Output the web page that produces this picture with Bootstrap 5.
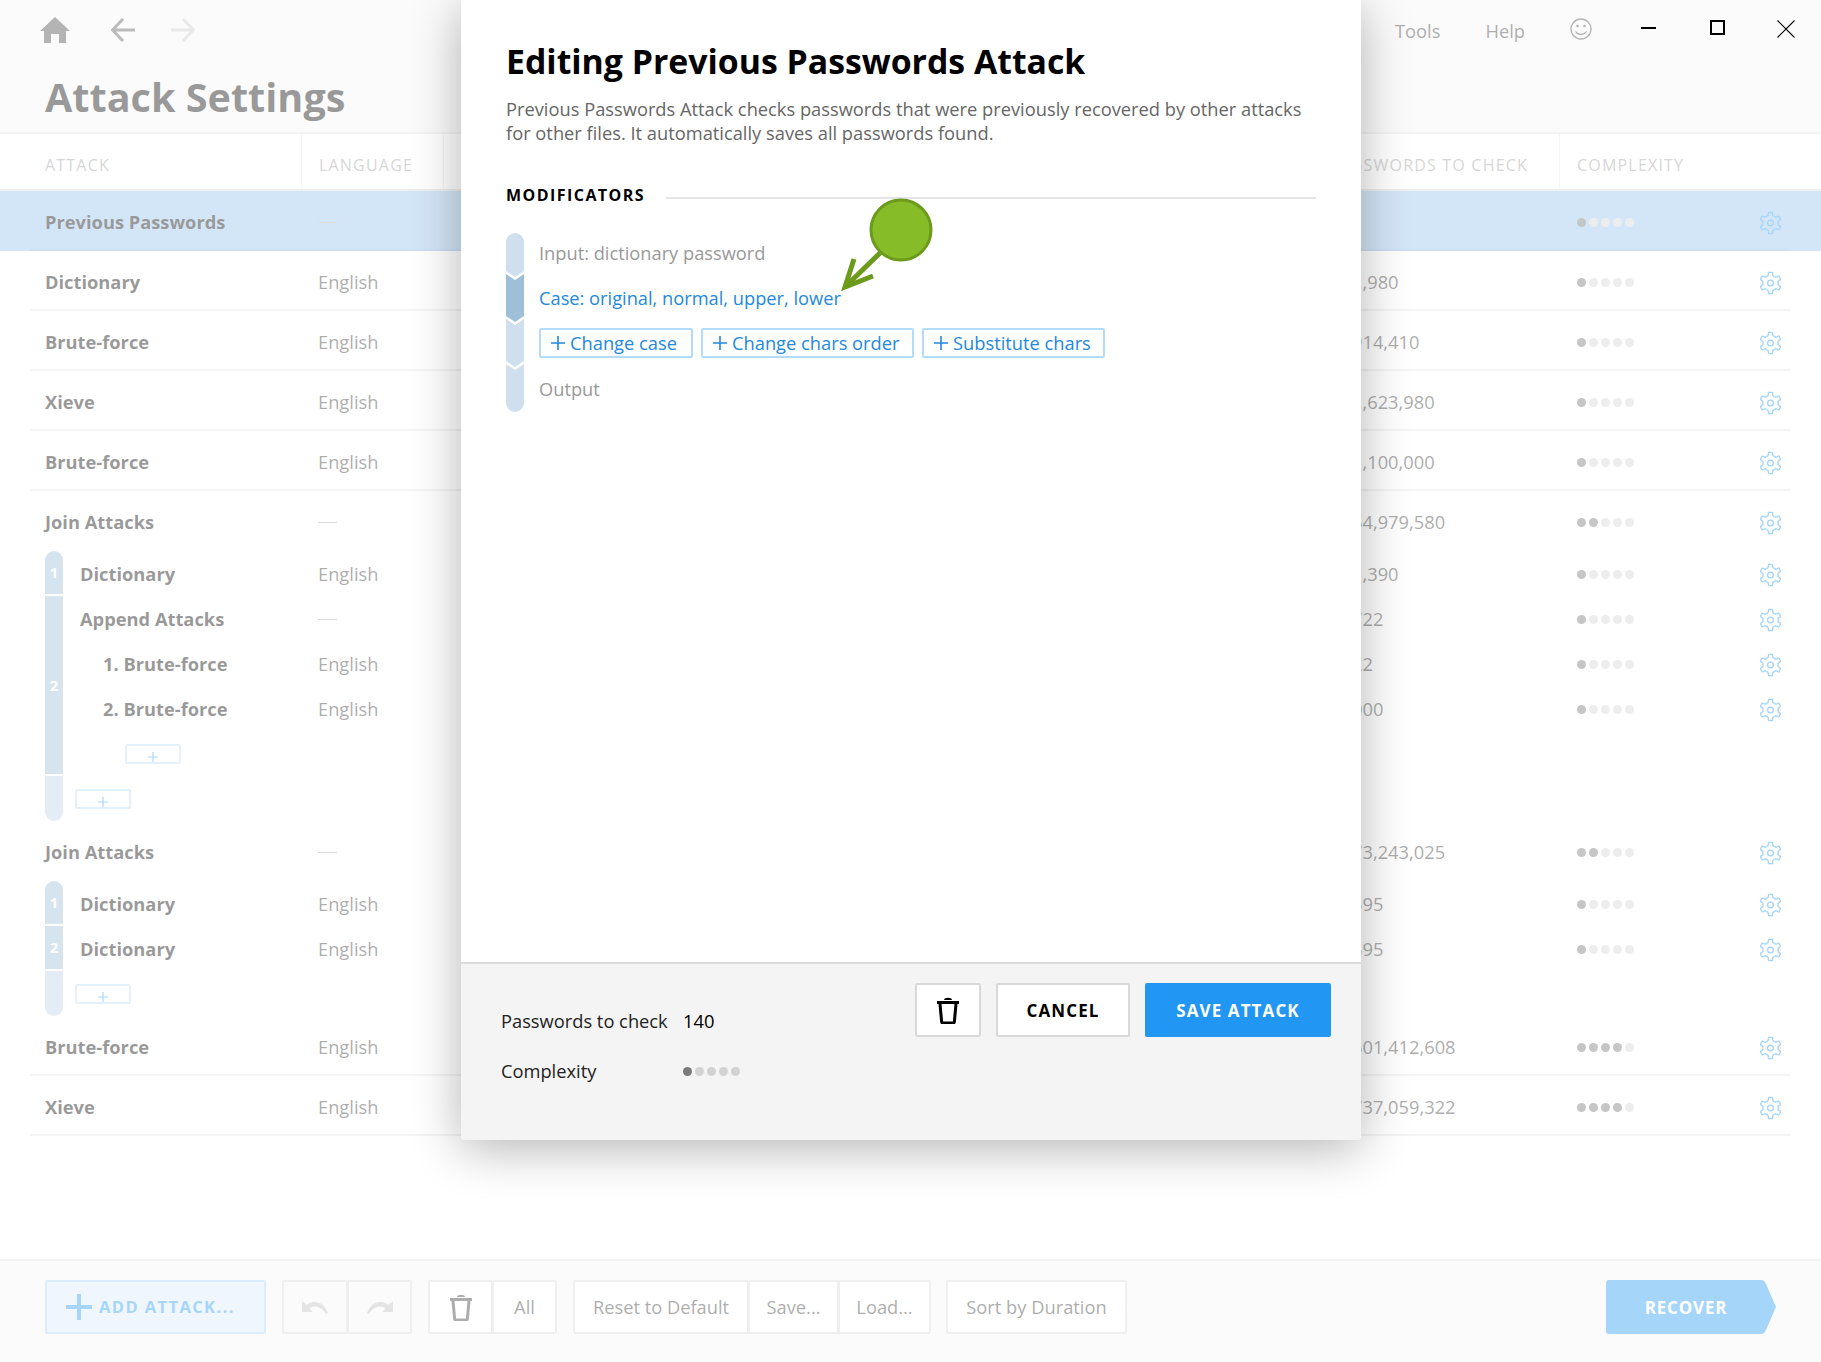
<!DOCTYPE html>
<html lang="en">
<head>
<meta charset="utf-8">
<title>Attack Settings</title>
<link href="https://cdn.jsdelivr.net/npm/bootstrap@5.3.0/dist/css/bootstrap.min.css" rel="stylesheet">
<style>
html,body{margin:0;height:100%;background:#fff}
body{font-family:"Open Sans","Liberation Sans",sans-serif;font-size:18.3px;color:#000;overflow:hidden}
.appwin{position:relative;width:1821px;height:1362px;overflow:hidden}
.topzone{height:134px;background:#f4f4f4;border-bottom:2px solid #e4e4e4;padding:17px 26px 0 40px}
.navline{height:26px}
.page-ttl{margin:28px 0 0 5px;font-size:39.6px;line-height:52px;font-weight:700;color:#000}
.menu-txt{color:#333;font-size:18.3px;line-height:28px}
.winctl{position:relative;z-index:3}
.colhead{display:grid;grid-template-columns:256px 142px 1116px 1fr;height:57px;padding-left:45px;align-items:center;font-size:16px;letter-spacing:1.2px;color:#999;text-transform:uppercase;border-bottom:2px solid #d8d8d8}
.colhead>div{height:100%;display:flex;align-items:center;padding-top:6px}
.colhead .dv{border-left:1px solid #e8e8e8;padding-left:17px}
.colhead .pwh{justify-content:flex-end;padding-right:31px}
.arow-wrap.is-sel{background:#91c0ed}
.arow{display:grid;grid-template-columns:273px 1034px 225px 183px 21px;height:60px;margin:0 30px;padding:4px 10px 0 15px;align-items:center;border-bottom:2px solid #e3e3e3}
.is-sel .arow{border-bottom-color:#7fb0e0;}
.arow.noline{border-bottom:0;padding-top:2px}
.subrow{display:grid;grid-template-columns:255px 1034px 225px 183px 21px;height:45px;padding-top:1px;align-items:center}
.groupbox{margin-left:45px;margin-right:30px}
.groupbox .subrow{padding-right:10px}
.segcol{width:18px;gap:2px}
.seg{background:#98bbd7;color:#fff;font-size:15px;font-weight:700;display:flex;align-items:center;justify-content:center}
.seg.s-first{border-radius:9px 9px 0 0}
.seg.s-last{background:#bbd2e6;border-radius:0 0 9px 9px}
.nm{font-weight:700;color:#000}
.lv0{padding-left:17px}
.lv1{padding-left:40px}
.lng{color:#333}
.dash{display:block;width:19px;height:1px;background:#aaa}
.pwv{color:#333}
.dots{gap:3px;display:flex}
.dots i{display:block;width:9px;height:9px;border-radius:50%;background:#d2d2d2}
.dots i.on{background:#707070}
.dots i.dot-modal{background:#7a7a7a}
.gear-ic{width:21px;height:24px;margin-top:1px;display:block;color:#2196f3}
.miniplus{display:flex;align-items:center;justify-content:center;height:20px;width:56px;padding:6px 0 0;background:#fff;border:2px solid #b9dcf9;border-radius:2px;color:#2196f3}
.miniplus.lv-a{margin-left:12px}
.miniplus.lv-b{margin-left:62px}
.botbar{position:absolute;left:0;right:0;bottom:0;height:103px;background:#f4f4f4;border-top:2px solid #e4e4e4;padding:19px 45px 0}
.tbtn{height:54px;border:2px solid #d7d7d7;border-radius:2px;background:#fff;color:#333;font-size:18.3px;padding:0;display:flex;align-items:center;justify-content:center}
.tbtn:disabled{background:#f4f4f4;opacity:1;border-color:#d7d7d7}
.tbtn-add{width:221px;background:#d7e8fa;border-color:#a5cff7;color:#2196f3;font-weight:700;font-size:16.5px;letter-spacing:1.4px;justify-content:flex-start;padding-left:19px;gap:7px}
.w65{width:65px}.w66{width:66px}.w176{width:176px}.w91{width:91px}.w93{width:93px}.w181{width:181px}
.tgap{gap:16px}
.mgn1{margin-left:-1px}
.recov{margin-left:auto;width:170px;height:54px;flex:none;position:relative;color:#fff;font-weight:700;font-size:17px;letter-spacing:.8px;display:flex;align-items:center;justify-content:center;padding:2px 10px 0 0;background:none;border:0}
.recov svg{position:absolute;inset:0}
.recov span{position:relative}
.veil{position:absolute;inset:0;background:rgba(255,255,255,.6);z-index:1}
.dialogbox{position:absolute;left:461px;top:0;width:900px;height:1140px;background:#fff;z-index:2;box-shadow:0 8px 50px rgba(0,0,0,.3);border-radius:0 0 4px 4px}
.dlg-main{padding:36px 45px 0}
.dlg-ttl{font-size:33.8px;line-height:50px;font-weight:700;margin:0;color:#000}
.dlg-desc{font-size:18.3px;line-height:24px;color:#666;margin:11px 0 0}
.sect-line{margin-top:40px;height:20px;gap:21px}
.sect-ttl{font-size:16px;font-weight:700;letter-spacing:1.45px;line-height:20px}
.sect-rule{height:2px;background:#e4e4e4;margin-top:12px}
.stepper{margin-top:26px;gap:15px}
.barsvg{display:block;margin-top:2px}
.stp{height:45px;display:flex;align-items:center;font-size:18.25px;color:#999}
.stp.stp-up{padding-bottom:2px}
.stp.act{color:#2288e0}
.addbtn{height:30px;border:2px solid #b3dcfb;border-radius:2px;background:#fff;color:#2288e0;font-size:18.3px;padding:0 0 0 10px;display:flex;align-items:center;justify-content:flex-start;gap:5px;line-height:26px}
.ab1{width:154px}.ab2{width:213px}.ab3{width:183px}
.addrow{gap:8px;margin-top:-1px;margin-bottom:1px}
.dlg-foot{background:#f4f4f4;border-top:2px solid #dcdcdc;height:178px;padding:19px 30px 0 40px;border-radius:0 0 4px 4px}
.lbl{width:182px;color:#222}
.foot-l1{margin-top:26px;line-height:24px}
.foot-l2{margin-top:26px;line-height:24px;align-items:center}
.fbtn{height:54px;border:2px solid #d9d9d9;background:#fff;border-radius:2px;padding:2px 0 0;color:#000;font-weight:700;font-size:17px;letter-spacing:1.1px;display:flex;align-items:center;justify-content:center}
.fb-tr{width:66px;padding-top:0}.fb-ca{width:134px}
.fb-sv{width:186px;background:#2196f3;border-color:#2196f3;color:#fff}
.fgap{gap:15px}
.annot{position:absolute;left:375px;top:190px;z-index:4;display:block}
</style>
</head>
<body>
<svg width="0" height="0" class="d-none">
  <symbol id="gearsym" viewBox="1 0 22 24">
    <g fill="none" stroke="currentColor" stroke-width="1.4" stroke-linejoin="round">
      <circle cx="12" cy="12" r="3"/>
      <g id="gt"><path d="M8 5.07 9.500 4.300 10 .8H14L14.500 4.300 16 5.070"/></g>
      <use href="#gt" transform="rotate(60 12 12)"/>
      <use href="#gt" transform="rotate(120 12 12)"/>
      <use href="#gt" transform="rotate(180 12 12)"/>
      <use href="#gt" transform="rotate(240 12 12)"/>
      <use href="#gt" transform="rotate(300 12 12)"/>
    </g>
  </symbol>
  <symbol id="trashsym" viewBox="0 0 22 28">
    <path d="M0 5h22v3H0zM7 4c0-3 8-3 8 0z" fill="currentColor"/>
    <path d="M3 8l1.6 17.5c.1 1 .8 1.5 1.6 1.5h9.6c.8 0 1.5-.5 1.6-1.5L19 8" fill="none" stroke="currentColor" stroke-width="3"/>
  </symbol>
  <symbol id="plussym" viewBox="0 0 14 14"><path d="M7 0v14M0 7h14" stroke="currentColor" stroke-width="1.6" fill="none"/></symbol>
</svg>
<div class="appwin">
  <header class="topzone">
    <div class="navline d-flex align-items-start">
      <svg width="30" height="26" viewBox="0 0 30 26" class="d-block"><path d="M15 0 30 14h-4v12h-7v-9h-8v9H4V14H0z" fill="#444"/></svg>
      <svg width="24" height="24" viewBox="0 0 24 24" class="d-block" style="margin-left:41px;margin-top:1px"><path d="M24 12H2M12 1 1.500 12 12 23" fill="none" stroke="#555" stroke-width="3"/></svg>
      <svg width="24" height="24" viewBox="0 0 24 24" class="d-block" style="margin-left:36px;margin-top:1px"><path d="M0 12H22M12 1 22.500 12 12 23" fill="none" stroke="#c8c8c8" stroke-width="3"/></svg>
      <div class="ms-auto d-flex align-items-start">
        <span class="menu-txt">Tools</span>
        <span class="menu-txt" style="margin-left:45px">Help</span>
        <svg width="22" height="22" viewBox="0 0 22 22" class="d-block" style="margin-left:45px;margin-top:1px"><g fill="none" stroke="#444" stroke-width="1.300"><circle cx="11" cy="11" r="10"/><path d="M5.500 13.500c2.500 4 8.500 4 11 0"/></g><circle cx="7.500" cy="8" r="1.300" fill="#444"/><circle cx="14.500" cy="8" r="1.300" fill="#444"/></svg>
        <div class="winctl d-flex align-items-start">
          <svg width="15" height="22" viewBox="0 0 15 22" class="d-block" style="margin-left:49px"><path d="M0 10h15v2H0z" fill="#000"/></svg>
          <svg width="15" height="16" viewBox="0 0 15 16" class="d-block" style="margin-left:54px;margin-top:3px"><path d="M1 1h13v13H1z" fill="none" stroke="#000" stroke-width="2"/></svg>
          <svg width="18" height="18" viewBox="0 0 18 18" class="d-block" style="margin-left:52px;margin-top:3px"><path d="M.5.5l17 17M17.500.5l-17 17" stroke="#000" stroke-width="1.100" fill="none"/></svg>
        </div>
      </div>
    </div>
    <h1 class="page-ttl">Attack Settings</h1>
  </header>

  <div class="colhead">
    <div>Attack</div>
    <div class="dv">Language</div>
    <div class="dv pwh">Passwords to check</div>
    <div class="dv">Complexity</div>
  </div>

  <div class="arow-wrap is-sel"><div class="arow"><span class="nm">Previous Passwords</span><span class="dash"></span><span class="pwv"></span><span class="dots"><i class="on"></i><i></i><i></i><i></i><i></i></span><svg class="gear-ic"><use href="#gearsym"/></svg></div></div>
  <div class="arow"><span class="nm">Dictionary</span><span class="lng">English</span><span class="pwv">1,980</span><span class="dots"><i class="on"></i><i></i><i></i><i></i><i></i></span><svg class="gear-ic"><use href="#gearsym"/></svg></div>
  <div class="arow"><span class="nm">Brute-force</span><span class="lng">English</span><span class="pwv">914,410</span><span class="dots"><i class="on"></i><i></i><i></i><i></i><i></i></span><svg class="gear-ic"><use href="#gearsym"/></svg></div>
  <div class="arow"><span class="nm">Xieve</span><span class="lng">English</span><span class="pwv">1,623,980</span><span class="dots"><i class="on"></i><i></i><i></i><i></i><i></i></span><svg class="gear-ic"><use href="#gearsym"/></svg></div>
  <div class="arow"><span class="nm">Brute-force</span><span class="lng">English</span><span class="pwv">1,100,000</span><span class="dots"><i class="on"></i><i></i><i></i><i></i><i></i></span><svg class="gear-ic"><use href="#gearsym"/></svg></div>

  <div class="arow noline"><span class="nm">Join Attacks</span><span class="dash"></span><span class="pwv">64,979,580</span><span class="dots"><i class="on"></i><i class="on"></i><i></i><i></i><i></i></span><svg class="gear-ic"><use href="#gearsym"/></svg></div>
  <div class="groupbox d-flex">
    <div class="segcol d-flex flex-column">
      <div class="seg s-first" style="height:43px">1</div>
      <div class="seg" style="height:178px">2</div>
      <div class="seg s-last" style="height:45px"></div>
    </div>
    <div class="flex-grow-1">
      <div class="subrow"><span class="nm lv0">Dictionary</span><span class="lng">English</span><span class="pwv">1,390</span><span class="dots"><i class="on"></i><i></i><i></i><i></i><i></i></span><svg class="gear-ic"><use href="#gearsym"/></svg></div>
      <div class="subrow"><span class="nm lv0">Append Attacks</span><span class="dash"></span><span class="pwv">722</span><span class="dots"><i class="on"></i><i></i><i></i><i></i><i></i></span><svg class="gear-ic"><use href="#gearsym"/></svg></div>
      <div class="subrow"><span class="nm lv1">1. Brute-force</span><span class="lng">English</span><span class="pwv">22</span><span class="dots"><i class="on"></i><i></i><i></i><i></i><i></i></span><svg class="gear-ic"><use href="#gearsym"/></svg></div>
      <div class="subrow"><span class="nm lv1">2. Brute-force</span><span class="lng">English</span><span class="pwv">000</span><span class="dots"><i class="on"></i><i></i><i></i><i></i><i></i></span><svg class="gear-ic"><use href="#gearsym"/></svg></div>
      <div class="subrow"><button class="miniplus lv-b" type="button" aria-label="Add"><svg width="10" height="10"><use href="#plussym"/></svg></button></div>
      <div class="subrow"><button class="miniplus lv-a" type="button" aria-label="Add"><svg width="10" height="10"><use href="#plussym"/></svg></button></div>
    </div>
  </div>

  <div class="arow noline"><span class="nm">Join Attacks</span><span class="dash"></span><span class="pwv">73,243,025</span><span class="dots"><i class="on"></i><i class="on"></i><i></i><i></i><i></i></span><svg class="gear-ic"><use href="#gearsym"/></svg></div>
  <div class="groupbox d-flex">
    <div class="segcol d-flex flex-column">
      <div class="seg s-first" style="height:43px">1</div>
      <div class="seg" style="height:43px">2</div>
      <div class="seg s-last" style="height:45px"></div>
    </div>
    <div class="flex-grow-1">
      <div class="subrow"><span class="nm lv0">Dictionary</span><span class="lng">English</span><span class="pwv">595</span><span class="dots"><i class="on"></i><i></i><i></i><i></i><i></i></span><svg class="gear-ic"><use href="#gearsym"/></svg></div>
      <div class="subrow"><span class="nm lv0">Dictionary</span><span class="lng">English</span><span class="pwv">595</span><span class="dots"><i class="on"></i><i></i><i></i><i></i><i></i></span><svg class="gear-ic"><use href="#gearsym"/></svg></div>
      <div class="subrow"><button class="miniplus lv-a" type="button" aria-label="Add"><svg width="10" height="10"><use href="#plussym"/></svg></button></div>
    </div>
  </div>

  <div class="arow"><span class="nm">Brute-force</span><span class="lng">English</span><span class="pwv">601,412,608</span><span class="dots"><i class="on"></i><i class="on"></i><i class="on"></i><i class="on"></i><i></i></span><svg class="gear-ic"><use href="#gearsym"/></svg></div>
  <div class="arow"><span class="nm">Xieve</span><span class="lng">English</span><span class="pwv">737,059,322</span><span class="dots"><i class="on"></i><i class="on"></i><i class="on"></i><i class="on"></i><i></i></span><svg class="gear-ic"><use href="#gearsym"/></svg></div>

  <footer class="botbar d-flex align-items-start tgap">
    <button class="btn tbtn tbtn-add" type="button"><svg width="26" height="26" viewBox="0 0 26 26"><path d="M11 0h4v11h11v4H15v11h-4V15H0v-4h11z" fill="#2196f3"/></svg>ADD ATTACK...</button>
    <div class="btn-group">
      <button class="btn tbtn w66" type="button" disabled><svg width="26" height="13" viewBox="0 0 26 13"><path d="M0 0v11h11L7.500 7.500C12 4 19 5 24 13l2-1C22 1 12-2 4.500 4z" fill="#bbb"/></svg></button>
      <button class="btn tbtn w65" type="button" disabled><svg width="26" height="13" viewBox="0 0 26 13"><path d="M26 0v11H15l3.500-3.500C14 4 7 5 2 13L0 12C4 1 14-2 21.500 4z" fill="#bbb"/></svg></button>
    </div>
    <div class="btn-group">
      <button class="btn tbtn w65" type="button"><svg width="22" height="28" style="color:#333"><use href="#trashsym"/></svg></button>
      <button class="btn tbtn w65" type="button">All</button>
    </div>
    <div class="btn-group">
      <button class="btn tbtn w176" type="button">Reset to Default</button>
      <button class="btn tbtn w91" type="button">Save...</button>
      <button class="btn tbtn w93" type="button">Load...</button>
    </div>
    <button class="btn tbtn w181 mgn1" type="button">Sort by Duration</button>
    <button class="recov" type="button"><svg width="170" height="54" viewBox="0 0 170 54"><path d="M3 0h152q3 0 4.500 3L170 27l-10.500 24q-1.500 3-4.500 3H3q-3 0-3-3V3q0-3 3-3z" fill="#2196f3"/></svg><span>RECOVER</span></button>
  </footer>

  <div class="veil"></div>

  <section class="dialogbox d-flex flex-column">
    <div class="dlg-main flex-grow-1">
      <h2 class="dlg-ttl">Editing Previous Passwords Attack</h2>
      <p class="dlg-desc">Previous Passwords Attack checks passwords that were previously recovered by other attacks<br>for other files. It automatically saves all passwords found.</p>
      <div class="sect-line d-flex align-items-start">
        <span class="sect-ttl">MODIFICATORS</span>
        <span class="sect-rule flex-grow-1"></span>
      </div>
      <div class="stepper d-flex align-items-start">
        <svg class="barsvg" width="18" height="179" viewBox="0 0 18 179">
          <path d="M0 9a9 9 0 0 1 18 0V38L9 44 0 38Z" fill="#cfdfed"/>
          <path d="M0 41 9 47 18 41V83L9 89 0 83Z" fill="#9ebfd8"/>
          <path d="M0 86 9 92 18 86V128L9 134 0 128Z" fill="#cfdfed"/>
          <path d="M0 131 9 137 18 131V170a9 9 0 0 1-18 0Z" fill="#cfdfed"/>
        </svg>
        <div class="flex-grow-1">
          <div class="stp stp-up">Input: dictionary password</div>
          <div class="stp stp-up act">Case: original, normal, upper, lower</div>
          <div class="stp addrow">
            <button class="addbtn ab1" type="button"><svg width="14" height="14"><use href="#plussym"/></svg>Change case</button>
            <button class="addbtn ab2" type="button"><svg width="14" height="14"><use href="#plussym"/></svg>Change chars order</button>
            <button class="addbtn ab3" type="button"><svg width="14" height="14"><use href="#plussym"/></svg>Substitute chars</button>
          </div>
          <div class="stp">Output</div>
        </div>
      </div>
    </div>
    <div class="dlg-foot d-flex justify-content-between align-items-start">
      <div>
        <div class="foot-l1 d-flex"><span class="lbl">Passwords to check</span><span>140</span></div>
        <div class="foot-l2 d-flex"><span class="lbl">Complexity</span><span class="dots"><i class="dot-modal"></i><i></i><i></i><i></i><i></i></span></div>
      </div>
      <div class="d-flex fgap">
        <button class="fbtn fb-tr" type="button"><svg width="22" height="28" style="color:#000"><use href="#trashsym"/></svg></button>
        <button class="fbtn fb-ca" type="button">CANCEL</button>
        <button class="fbtn fb-sv" type="button">SAVE ATTACK</button>
      </div>
    </div>
    <svg class="annot" width="100" height="110" viewBox="0 0 100 110">
      <circle cx="65" cy="40" r="30" fill="#85bc27" stroke="#6c9a1b" stroke-width="3"/>
      <path d="M45 62 9 97" fill="none" stroke="#6c9a1b" stroke-width="5"/>
      <path d="M18 69 9 97 37 86" fill="none" stroke="#6c9a1b" stroke-width="5"/>
    </svg>
  </section>
</div>
<script src="https://cdn.jsdelivr.net/npm/bootstrap@5.3.0/dist/js/bootstrap.bundle.min.js"></script>
</body>
</html>
